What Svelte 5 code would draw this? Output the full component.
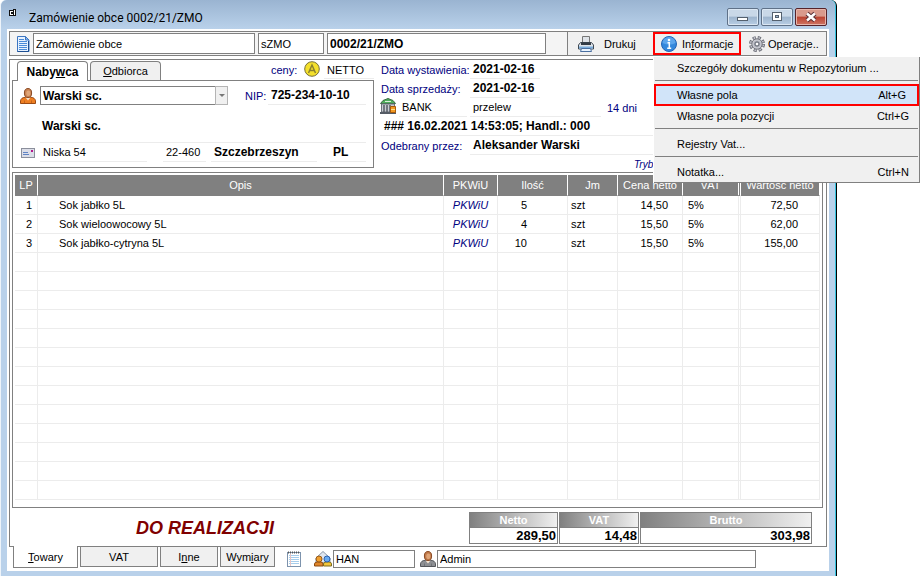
<script lang="ts">
  interface Item {
    name: string;
    qty: string;
    unit: string;
    price: string;
    vat: string;
    value: string;
  }

  interface MenuEntry {
    label: string;
    shortcut?: string;
    selected?: boolean;
    divider?: boolean;
  }

  const items: Item[] = [
    { name: "Sok jabłko 5L", qty: "5", unit: "szt", price: "14,50", vat: "5%", value: "72,50" },
    { name: "Sok wieloowocowy 5L", qty: "4", unit: "szt", price: "15,50", vat: "5%", value: "62,00" },
    { name: "Sok jabłko-cytryna 5L", qty: "10", unit: "szt", price: "15,50", vat: "5%", value: "155,00" },
  ];
  const emptyRows = Array.from({ length: 13 });

  const menu: MenuEntry[] = [
    { label: "Szczegóły dokumentu w Repozytorium ..." },
    { label: "Własne pola", shortcut: "Alt+G", selected: true, divider: true },
    { label: "Własne pola pozycji", shortcut: "Ctrl+G" },
    { label: "Rejestry Vat...", divider: true },
    { label: "Notatka...", shortcut: "Ctrl+N", divider: true },
  ];

  let docName = $state("Zamówienie obce");
  let docType = $state("sZMO");
  let docNumber = $state("0002/21/ZMO");
  let group = $state("HAN");
  let user = $state("Admin");
  let menuOpen = $state(true);
</script>

{#snippet person(body: string, dark: string, skin: string)}
  <svg width="16" height="16" viewBox="0 0 16 16" aria-hidden="true">
    <path d="M.5 15.500v-2.600C.8 10.700 2.500 9.500 5 9.300h6c2.500.2 4.200 1.400 4.500 3.600v2.600z" fill={body} stroke={dark} />
    <path d="M5.500 9.500 8 12.500l2.500-3z" fill="#f6e3cf" />
    <ellipse cx="8" cy="5" rx="3.600" ry="4.500" fill={skin} stroke="#8a4a24" />
    <ellipse cx="8.300" cy="5.200" rx="2" ry="2.800" fill="#dfa578" />
    <path d="M4.500 12.500v2.500M11.500 12.500v2.500" stroke={dark} stroke-opacity=".5" />
  </svg>
{/snippet}

<div class="window">
  <header class="titlebar">
    <svg class="app-icon" width="8" height="8" viewBox="0 0 8 8" aria-hidden="true">
      <path d="M0 1h4v-1h3v7h-7z" fill="#111" />
      <path d="M1 2h3v4h-3z" fill="#fff" />
      <path d="M2 3h2v2h-2z" fill="#111" />
      <path d="M5 1h1v5h-1z" fill="#fff" />
    </svg>
    <h1>Zamówienie obce 0002/21/ZMO</h1>
    <div class="caption-buttons">
      <button type="button" aria-label="Minimalizuj">
        <svg width="14" height="12" viewBox="0 0 14 12"><rect x="1.500" y="6.500" width="10" height="3" fill="#fff" stroke="#54606e" /></svg>
      </button>
      <button type="button" aria-label="Maksymalizuj">
        <svg width="14" height="12" viewBox="0 0 14 12"><rect x="2.500" y="1.500" width="9" height="8" fill="#fff" stroke="#54606e" /><rect x="5.500" y="4.500" width="3" height="2" fill="#9eb6d0" stroke="#54606e" /></svg>
      </button>
      <button type="button" class="close" aria-label="Zamknij">
        <svg width="14" height="12" viewBox="0 0 14 12"><path d="M3 2.500l8 7m0-7l-8 7" stroke="#5a3036" stroke-width="4.500" /><path d="M3 2.500l8 7m0-7l-8 7" stroke="#fff" stroke-width="2.500" /></svg>
      </button>
    </div>
  </header>

  <main class="client">
    <div class="toolbar">
      <div class="doc-fields">
        <svg width="14" height="16" viewBox="0 0 14 16" aria-hidden="true">
          <path d="M1.500.5h8l3.500 3.500v11.500h-11.500z" fill="#e7f2ff" stroke="#3d76c2" />
          <path d="M9.500.5v3.500h3.500z" fill="#8fbdf0" stroke="#3d76c2" />
          <path d="M3 3.500h5M3 5.500h8M3 7.500h8M3 9.500h8M3 11.500h8M3 13.500h8" stroke="#4b8bd8" />
          <path d="M12.500 5v10.500h-11" stroke="#1d4f93" fill="none" />
        </svg>
        <input class="field name" aria-label="Nazwa dokumentu" bind:value={docName} />
        <input class="field type" aria-label="Typ dokumentu" bind:value={docType} />
        <input class="field number" aria-label="Numer dokumentu" bind:value={docNumber} />
      </div>
      <button type="button" class="tool">
        <svg width="16" height="16" viewBox="0 0 16 16" aria-hidden="true">
          <path d="M4.500.5h7v7h-7z" fill="#dfe3e8" stroke="#777" />
          <path d="M2.500 6.500h11l2 2.500v4h-15v-4z" fill="#dfe4ea" stroke="#3f4852" />
          <path d="M3 6.500h10v2.500h-10z" fill="#333c46" />
          <path d="M1 11.500h14" stroke="#7aaede" stroke-width="2" />
          <path d="M3.500 12.500h9l1 3h-11z" fill="#eaf4ff" stroke="#4a6fa0" />
        </svg>
        <span>Drukuj</span>
      </button>
      <div class="menu-anchor">
        <button type="button" class="tool active" aria-expanded={menuOpen} onclick={() => (menuOpen = !menuOpen)}>
          <svg width="16" height="16" viewBox="0 0 16 16" aria-hidden="true">
            <circle cx="8" cy="8" r="7.500" fill="#3488dc" stroke="#2464b4" />
            <path d="M1.500 7a6.500 6 0 0 1 13 0q-6 3-13 0" fill="#5ba5ec" />
            <circle cx="8" cy="4" r="1.300" fill="#fff" />
            <path d="M6.500 6.800h1.800v5M6.200 12.300h4" stroke="#fff" stroke-width="1.500" fill="none" />
          </svg>
          <span>In<u>f</u>ormacje</span>
        </button>
        {#if menuOpen}
          <div class="menu" role="menu">
            {#each menu as entry}
              {#if entry.divider}<hr />{/if}
              <button type="button" role="menuitem" class="menu-item" class:selected={entry.selected}>
                <span>{entry.label}</span>
                {#if entry.shortcut}<span class="shortcut">{entry.shortcut}</span>{/if}
              </button>
            {/each}
          </div>
        {/if}
      </div>
      <button type="button" class="tool last">
        <svg width="16" height="16" viewBox="0 0 16 16" aria-hidden="true">
          <circle cx="8" cy="8" r="6.300" fill="none" stroke="#6a6c76" stroke-width="3.400" stroke-dasharray="3 1.948" />
          <circle cx="8" cy="8" r="6.300" fill="none" stroke="#c3c4cc" stroke-width="1.800" stroke-dasharray="1.500 3.448" stroke-dashoffset="-.75" />
          <circle cx="8" cy="8" r="5.200" fill="#c9cad2" stroke="#75777f" />
          <circle cx="8" cy="8" r="3.300" fill="#a9abb5" />
          <circle cx="8" cy="8" r="2" fill="#fff" stroke="#5a5f6b" />
        </svg>
        <span>Operacje..</span>
      </button>
    </div>

    <div class="sheet">
      <div class="head">
        <section class="party">
          <div class="party-tabs">
            <button type="button" class="tab current">Naby<u>w</u>ca</button>
            <button type="button" class="tab"><u>O</u>dbiorca</button>
            <span class="label prices">ceny:</span>
            <svg width="16" height="16" viewBox="0 0 16 16" aria-hidden="true">
              <circle cx="8" cy="8" r="7.300" fill="#f4e02c" stroke="#77713a" />
              <path d="M4.500 12l3.500-8 3.500 8M6 9.500h4" fill="none" stroke="#8a8130" stroke-width="1.500" />
            </svg>
            <span class="line netto">NETTO</span>
          </div>
          <div class="card">
            <div class="card-row">
              <span class="icon">{@render person("#ee7f22", "#9c4a12", "#c98352")}</span>
              <div class="combo">
                <select aria-label="Nabywca"><option>Warski sc.</option></select>
                <span class="arrow"></span>
              </div>
              <span class="label nip">NIP:</span>
              <b class="line grow">725-234-10-10</b>
            </div>
            <div class="card-row company">
              <span class="icon"></span>
              <b class="line grow">Warski sc.</b>
            </div>
            <div class="card-row address">
              <span class="icon mail">
                <svg width="14" height="10" viewBox="0 0 14 10" aria-hidden="true">
                  <rect x=".5" y=".5" width="13" height="9" fill="#dcdee8" stroke="#8b8f9c" />
                  <path d="M10 2h2v2h-2z" fill="#b3168c" />
                  <path d="M2 4.500h5M2 6.500h6" stroke="#5f83c4" />
                </svg>
              </span>
              <span class="line street">Niska 54</span>
              <span class="line zip">22-460</span>
              <b class="line city">Szczebrzeszyn</b>
              <b class="line country">PL</b>
            </div>
          </div>
        </section>

        <section class="details">
          <div class="detail">
            <span class="label key">Data wystawienia:</span>
            <b class="line date">2021-02-16</b>
          </div>
          <div class="detail">
            <span class="label key">Data sprzedaży:</span>
            <b class="line date">2021-02-16</b>
          </div>
          <div class="detail">
            <span class="key bank">
              <svg width="16" height="16" viewBox="0 0 16 16" aria-hidden="true">
                <path d="M.5 5.500L3 2.500 8 .5l5 2 2.500 3z" fill="#4fae5c" stroke="#3b6b43" />
                <path d="M5 3.500h6" stroke="#d8f0da" />
                <path d="M1.500 6h13v8h-13z" fill="#c9ccd2" stroke="#6d737d" />
                <path d="M4 7v7M7 7v7M10 7v7" stroke="#555c66" stroke-width="1.500" />
                <path d="M0 15h16" stroke="#555c66" stroke-width="2" />
                <path d="M10.500 8.500h5v6h-5z" fill="#f39a22" stroke="#a85b0a" />
                <path d="M11 11.500h4" stroke="#ffe08a" />
              </svg>
              <span class="line grow">BANK</span>
            </span>
            <span class="line method">przelew</span>
            <span class="label">14 dni</span>
          </div>
          <div class="detail">
            <b class="line grow note">### 16.02.2021 14:53:05; Handl.: 000</b>
          </div>
          <div class="detail">
            <span class="label key">Odebrany przez:</span>
            <b class="line grow">Aleksander Warski</b>
          </div>
          <div class="detail mode">Tryb:</div>
        </section>
      </div>

      <div class="grid-box">
        <table>
          <thead>
            <tr>
              <th class="c-lp">LP</th>
              <th>Opis</th>
              <th class="c-pkwiu">PKWiU</th>
              <th class="c-qty">Ilość</th>
              <th class="c-unit">Jm</th>
              <th class="c-price">Cena netto</th>
              <th class="c-vat">VAT</th>
              <th class="c-value">Wartość netto</th>
            </tr>
          </thead>
          <tbody>
            {#each items as item, i}
              <tr>
                <td class="c-lp">{i + 1}</td>
                <td class="c-name">{item.name}</td>
                <td class="c-pkwiu">PKWiU</td>
                <td class="c-qty">{item.qty}</td>
                <td class="c-unit">{item.unit}</td>
                <td class="c-price">{item.price}</td>
                <td class="c-vat">{item.vat}</td>
                <td class="c-value">{item.value}</td>
              </tr>
            {/each}
            {#each emptyRows as _}
              <tr><td></td><td></td><td></td><td></td><td></td><td></td><td class="c-vat"></td><td></td></tr>
            {/each}
          </tbody>
        </table>
      </div>

      <div class="summary">
        <strong class="status">DO REALIZACJI</strong>
        <dl class="total net"><dt>Netto</dt><dd>289,50</dd></dl>
        <dl class="total tax"><dt>VAT</dt><dd>14,48</dd></dl>
        <dl class="total gross"><dt>Brutto</dt><dd>303,98</dd></dl>
      </div>
    </div>

    <footer class="bottom">
      <button type="button" class="btab goods current"><u>T</u>owary</button>
      <button type="button" class="btab vat">VAT</button>
      <button type="button" class="btab other">I<u>n</u>ne</button>
      <button type="button" class="btab sizes">Wym<u>i</u>ary</button>
      <svg class="notes" width="14" height="16" viewBox="0 0 14 16" aria-hidden="true">
        <rect x=".5" y="1.500" width="13" height="14" fill="#fff" stroke="#7d93ad" />
        <path d="M1 1.500h12" stroke="#555" stroke-width="2" stroke-dasharray="1 1" />
        <path d="M2 4.500h10M2 6.500h10M2 8.500h10M2 10.500h10M2 12.500h10" stroke="#a6cdec" />
        <path d="M3.500 3v12" stroke="#e6c4c4" />
      </svg>
      <label class="owner group">
        <svg width="18" height="16" viewBox="0 0 18 16" aria-hidden="true">
          <path d="M2 7l7-6.500 7 6.500v5h-14z" fill="#dfe6ef" stroke="#8a97a8" />
          <path d="M.5 15v-2q0-2 3-2h3q2.500 0 2.500 2v2z" fill="#e0862a" stroke="#8c4a10" />
          <circle cx="5" cy="8" r="3" fill="#f0a030" stroke="#96591a" />
          <path d="M9.500 15v-2q0-2 2.500-2h3q2.500 0 2.500 2v2z" fill="#f3c63b" stroke="#7c6a20" />
          <circle cx="13" cy="8" r="3" fill="#69aaf0" stroke="#2b62b0" />
        </svg>
        <input class="field" aria-label="Grupa" bind:value={group} />
      </label>
      <label class="owner operator">
        {@render person("#8d8f93", "#54565b", "#c07a4a")}
        <input class="field" aria-label="Operator" bind:value={user} />
      </label>
    </footer>
  </main>
</div>

<style>
  :global(body) { background: #fff; }

  .window, button, input, select {
    font-family: "Liberation Sans", Arial, sans-serif;
    font-size: 11px;
    color: #000;
  }
  .window {
    box-sizing: border-box;
    min-height: 100vh;
    margin-right: 86px;
    padding: 0 7px 5px 6px;
    background: #b9d1ea;
    border-left: 1px solid #eef4fa;
    border-right: 1px solid #000;
    border-radius: 6px 6px 0 0;
    box-shadow: inset -1px 0 #35c3de;
  }
  button { margin: 0; padding: 0; line-height: 14px; }
  b { font-size: 12px; }
  svg { flex: none; display: block; }

  .titlebar {
    display: flex;
    align-items: center;
    height: 29px;
    margin: 0 -6px;
    padding: 0 8px;
    background: linear-gradient(#9ab4d1, #b9d1ea);
    border-radius: 6px 6px 0 0;
  }
  .app-icon { align-self: flex-start; margin-top: 9px; }
  h1 {
    flex: 1;
    margin: 6px 0 0 12px;
    font: 12px/18px Roboto, "Open Sans", sans-serif;
  }
  .caption-buttons { display: flex; gap: 2px; margin-top: 5px; }
  .caption-buttons button {
    display: flex;
    align-items: center;
    justify-content: center;
    width: 32px;
    height: 18px;
    background: linear-gradient(#c9d8e8 45%, #9db4cd 50%, #b8cee5);
    border: 1px solid #5f7188;
    border-radius: 2px;
    box-shadow: inset 0 0 0 1px #dbe7f3;
  }
  .caption-buttons .close {
    background: linear-gradient(#d99a8c 45%, #bb4331 50%, #cf7564);
    border-color: #56232a;
    box-shadow: inset 0 0 0 1px #e6b5ab;
  }

  .client { padding: 2px 2px 3px; background: #fff; }
  .toolbar { display: flex; height: 23px; background: #f4f4f4; border: 1px solid #808080; }
  .doc-fields { display: flex; flex: 1; align-items: center; gap: 3px; padding: 0 21px 0 6px; }
  .field {
    box-sizing: border-box;
    min-width: 0;
    height: 21px;
    padding: 0 2px;
    background: #fff;
    border: 1px solid #808080;
    border-radius: 0;
  }
  .name { flex: 216; }
  .type { flex: 60; }
  .number { flex: 213; font-size: 12px; font-weight: bold; }
  .tool {
    display: flex;
    align-items: center;
    width: 86px;
    height: 23px;
    gap: 10px;
    padding-left: 10px;
    background: #f0f0f0;
    border: 0;
    border-left: 1px solid #808080;
  }
  .menu-anchor { position: relative; }
  .tool.active { width: 88px; gap: 5px; padding-left: 6px; border: 2px solid #f00; }
  .tool.last { width: 85px; gap: 3px; padding-left: 8px; border-left: 0; }

  .menu {
    position: absolute;
    z-index: 2;
    top: 25px;
    left: 1px;
    width: 265px;
    padding: 1px 0;
    background: #f0f0f0;
    border-right: 1px solid #808080;
    border-bottom: 1px solid #808080;
    box-shadow: -1px 0 #fff;
  }
  .menu hr { height: 1px; margin: 3px 1px 5px; background: #808080; border: 0; }
  .menu-item {
    display: flex;
    box-sizing: border-box;
    align-items: center;
    justify-content: space-between;
    width: 100%;
    height: 19px;
    padding: 0 10px 0 23px;
    background: none;
    border: 0;
    text-align: left;
  }
  .menu-item.selected { height: 22px; margin-top: -2px; padding: 0 11px 0 21px; background: #d1e4f9; border: 2px solid #f00; }

  .sheet { margin-top: 3px; padding: 0 3px 2px 2px; border: 1px solid #808080; }
  .head { display: flex; gap: 6px; height: 112px; }
  .party { flex: 0 0 362px; min-width: 0; padding-top: 1px; }
  .party-tabs { display: flex; height: 19px; padding-left: 5px; }
  .tab {
    width: 71px;
    height: 19px;
    margin-right: 2px;
    background: #f0f0f0;
    border: 1px solid #808080;
    border-bottom: 0;
    border-radius: 4px 4px 0 0;
  }
  .tab.current { z-index: 1; height: 20px; background: #fff; font-size: 12px; font-weight: bold; }
  .label { color: #000080; }
  .line { box-sizing: border-box; height: 19px; line-height: 19px; border-bottom: 1px solid #ececec; white-space: nowrap; }
  .grow { flex: 1; }
  .prices { width: 33px; margin-left: 108px; line-height: 19px; }
  .netto { flex: 1; height: 18px; margin-left: 4px; padding-left: 3px; }

  .card { border: 1px solid #808080; padding: 5px 7px 5px 6px; }
  .card-row { display: flex; align-items: center; height: 19px; }
  .icon { width: 20px; padding-left: 1px; }
  .combo { position: relative; width: 188px; }
  .combo select {
    display: block;
    width: 100%;
    height: 19px;
    padding: 0 2px;
    appearance: none;
    background: #fff;
    border: 1px solid #808080;
    border-radius: 0;
    font-size: 12px;
    font-weight: bold;
  }
  .arrow {
    position: absolute;
    inset: 0 0 0 auto;
    width: 11px;
    background: #f0f0f0;
    border: 1px solid #b4b4b4;
    pointer-events: none;
  }
  .arrow::after {
    position: absolute;
    top: 7px;
    left: 3px;
    border: 3px solid transparent;
    border-top-color: #777;
    border-bottom: 0;
    content: "";
  }
  .nip { width: 23px; margin-left: 17px; }
  .nip + .line { padding-left: 3px; }
  .company { height: 38px; }
  .company .line { height: 38px; padding-left: 2px; line-height: 42px; }
  .address .line { padding-left: 3px; }
  .mail { width: 19px; padding-left: 2px; }
  .street { width: 107px; margin-right: 16px; }
  .zip { width: 43px; margin-right: 5px; }
  .city { flex: 1; margin-right: 13px; }
  .country { width: 36px; }

  .details { flex: 1; min-width: 0; }
  .detail { display: flex; align-items: center; height: 19px; }
  .key { width: 88px; margin-right: 1px; padding-left: 1px; white-space: nowrap; }
  .bank { display: flex; gap: 3px; width: 87px; margin-right: 3px; padding-left: 0; }
  .key ~ .line, .bank .line { padding-left: 3px; }
  .date { width: 70px; }
  .method { width: 131px; margin-right: 6px; }
  .note { padding-left: 4px; }
  .mode { padding-left: 254px; color: #000080; font-size: 10px; font-style: italic; }

  .grid-box { padding: 2px 2px 7px; border: 1px solid #808080; }
  table { width: 100%; table-layout: fixed; border-collapse: separate; border-spacing: 0; }
  th {
    height: 20px;
    padding: 0;
    background: #808080;
    border-right: 1px solid #fff;
    border-bottom: 1px solid #808080;
    color: #fff;
    font-weight: normal;
    white-space: nowrap;
  }
  td { height: 18px; padding: 0; line-height: 18px; border-right: 1px solid #ececec; border-bottom: 1px solid #ececec; }
  th.c-lp { width: 22px; }
  th.c-pkwiu { width: 53px; }
  th.c-qty { width: 69px; }
  th.c-unit { width: 49px; }
  th.c-price { width: 64px; }
  th.c-vat { width: 55px; }
  th.c-value { width: 78px; }
  .c-vat { border-right-width: 3px; border-right-style: double; }
  td.c-lp { padding-right: 5px; text-align: right; }
  td.c-name { padding-left: 21px; }
  td.c-pkwiu { color: #000080; font-style: italic; text-align: center; }
  td.c-qty { padding-right: 40px; text-align: right; }
  td.c-unit { padding-left: 3px; }
  td.c-price { padding-right: 14px; text-align: right; }
  td.c-vat { padding-left: 5px; }
  td.c-value { padding-right: 21px; text-align: right; }

  .summary { display: flex; gap: 1px; padding: 4px 11px 0 0; }
  .status { flex: 1; padding-left: 124px; color: #800000; font-size: 18px; font-style: italic; line-height: 32px; }
  .total { box-sizing: border-box; margin: 0; height: 32px; border: 1px solid #808080; font-weight: bold; }
  .net { width: 89px; }
  .tax { width: 80px; }
  .gross { width: 172px; }
  dt {
    height: 14px;
    background: linear-gradient(90deg, #808080, #f0f0f0);
    border-bottom: 1px solid #808080;
    color: #fff;
    line-height: 14px;
    text-align: center;
  }
  dd { margin: 0; padding-right: 1px; font-size: 13px; line-height: 15px; text-align: right; }

  .bottom { display: flex; align-items: flex-start; padding-left: 4px; }
  .btab {
    height: 20px;
    margin-right: 2px;
    background: #f0f0f0;
    border: 1px solid #808080;
    border-top: 0;
  }
  .btab.current { position: relative; height: 22px; margin-top: -1px; background: #fff; }
  .goods { width: 65px; }
  .vat { width: 78px; }
  .other { width: 58px; }
  .sizes { width: 55px; }
  .notes { margin: 4px 13px 0 10px; }
  .owner { display: flex; align-items: center; gap: 1px; margin-top: 3px; }
  .owner .field { height: 18px; }
  .group .field { width: 82px; }
  .operator { flex: 1; margin: 3px 71px 0 5px; }
  .operator .field { flex: 1; }
</style>
